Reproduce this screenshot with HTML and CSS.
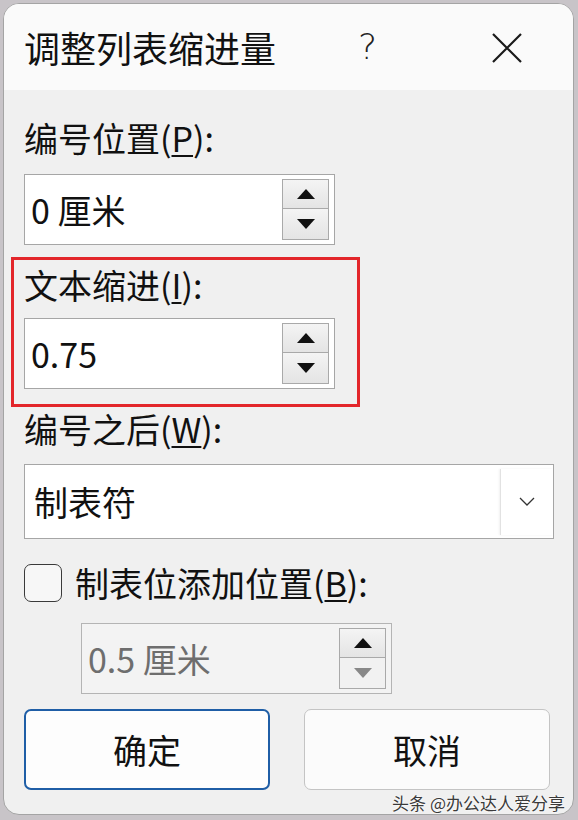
FILE: index.html
```html
<!DOCTYPE html>
<html lang="zh-CN">
<head>
  <meta charset="UTF-8" />
  <meta name="viewport" content="width=device-width, initial-scale=1.0"/>
  <title>调整列表缩进量</title>
  <link rel="stylesheet" href="styles.css">
</head>
<body>

  <div class="dialog">
    <div class="titlebar">
      <span class="title">调整列表缩进量</span>
      <span class="help">?</span>
      <svg class="close" width="32" height="32" viewBox="0 0 32 32">
        <path d="M2 2 L30 30 M30 2 L2 30" stroke="#1a1a1a" stroke-width="2.2" fill="none"/>
      </svg>
    </div>

    <div class="content">
      <div class="label label-first">编号位置(<u>P</u>):</div>
      <div class="spin">
        <span class="spin-value">0 厘米</span>
        <div class="spin-btns">
          <div class="spin-btn"><svg width="18" height="10" viewBox="0 0 18 10"><polygon points="9,0 18,10 0,10" fill="#111"/></svg></div>
          <div class="spin-btn"><svg width="18" height="10" viewBox="0 0 18 10"><polygon points="0,0 18,0 9,10" fill="#111"/></svg></div>
        </div>
      </div>

      <div class="highlight">
        <div class="label">文本缩进(<u>I</u>):</div>
        <div class="spin spin-second">
          <span class="spin-value">0.75</span>
          <div class="spin-btns">
            <div class="spin-btn"><svg width="18" height="10" viewBox="0 0 18 10"><polygon points="9,0 18,10 0,10" fill="#111"/></svg></div>
            <div class="spin-btn"><svg width="18" height="10" viewBox="0 0 18 10"><polygon points="0,0 18,0 9,10" fill="#111"/></svg></div>
          </div>
        </div>
      </div>

      <div class="label label-after">编号之后(<u>W</u>):</div>
      <div class="select">
        <span class="select-value">制表符</span>
        <div class="select-btn">
          <svg width="16" height="9" viewBox="0 0 16 9"><polyline points="1,1 8,8 15,1" stroke="#333" stroke-width="1.3" fill="none"/></svg>
        </div>
      </div>

      <div class="check-row">
        <span class="checkbox"></span>
        <span class="check-label">制表位添加位置(<u>B</u>):</span>
      </div>

      <div class="spin spin-disabled">
        <span class="spin-value">0.5 厘米</span>
        <div class="spin-btns">
          <div class="spin-btn"><svg width="18" height="10" viewBox="0 0 18 10"><polygon points="9,0 18,10 0,10" fill="#111"/></svg></div>
          <div class="spin-btn"><svg width="18" height="10" viewBox="0 0 18 10"><polygon points="0,0 18,0 9,10" fill="#888"/></svg></div>
        </div>
      </div>

      <div class="buttons">
        <button class="btn btn-ok">确定</button>
        <button class="btn">取消</button>
      </div>
    </div>

    <div class="watermark">头条 @办公达人爱分享</div>
  </div>

</body>
</html>
```

FILE: styles.css
```css
body {
  margin: 0;
  padding: 3px 4px 5px 3px;
  background: #c8c4c8;
  font-family: "Noto Sans CJK SC", "Noto Sans", sans-serif;
  color: #111;
}
.dialog {
  position: relative;
  width: 569px;
  height: 810px;
  background: #f0f0f0;
  border: 1px solid #a4a4a4;
  border-radius: 16px;
  overflow: hidden;
}
.titlebar {
  height: 86px;
  background: #fafafa;
  display: flex;
  align-items: center;
  padding-left: 20px;
}
.title {
  font-size: 36px;
  line-height: 42px;
  width: 334px;
}
.help {
  font-size: 36px;
  line-height: 42px;
  font-family: "DejaVu Sans", sans-serif;
  font-weight: 300;
  color: #222;
  width: 133px;
}
.close {
  margin-top: 2px;
}
.content {
  padding-left: 20px;
}
.label {
  font-size: 34px;
  line-height: 40px;
  height: 40px;
}
.label u {
  text-decoration-thickness: 2px;
  text-underline-offset: 3px;
}
.label-first {
  margin-top: 28px;
}
.spin {
  width: 309px;
  height: 69px;
  margin-top: 16px;
  background: #fff;
  border: 1px solid #a6a6a6;
  display: flex;
  align-items: center;
  justify-content: space-between;
}
.spin-value {
  font-size: 34px;
  line-height: 40px;
  padding-left: 6px;
}
.spin-btns {
  display: flex;
  flex-direction: column;
  margin-right: 5px;
}
.spin-btn {
  width: 45px;
  height: 28px;
  border: 1px solid #a9a9a9;
  background: linear-gradient(#f4f4f4, #e4e4e4);
  display: flex;
  align-items: center;
  justify-content: center;
}
.spin-btn + .spin-btn {
  border-top: none;
  height: 30px;
}
.highlight {
  width: 317px;
  margin: 12px 0 0 -13px;
  padding: 5px 16px 15px 10px;
  border: 3px solid #e3262b;
}
.spin-second {
  margin-top: 13px;
}
.label-after {
  margin-top: 2px;
}
.select {
  width: 528px;
  height: 73px;
  margin-top: 15px;
  background: #fff;
  border: 1px solid #a6a6a6;
  display: flex;
  align-items: center;
  justify-content: space-between;
}
.select-value {
  font-size: 34px;
  line-height: 40px;
  padding-left: 9px;
}
.select-btn {
  width: 52px;
  height: 66px;
  border-left: 1px solid #e2e2e2;
  box-shadow: -1px 0 2px rgba(0,0,0,0.06);
  display: flex;
  align-items: center;
  justify-content: center;
}
.check-row {
  display: flex;
  align-items: center;
  margin-top: 24px;
  height: 40px;
}
.checkbox {
  width: 36px;
  height: 36px;
  border: 1.5px solid #3a3a3a;
  border-radius: 7px;
  background: #f7f7f7;
}
.check-label {
  font-size: 34px;
  line-height: 40px;
  margin-left: 13px;
}
.check-label u {
  text-decoration-thickness: 2px;
  text-underline-offset: 3px;
}
.spin-disabled {
  margin: 20px 0 0 57px;
  background: #f3f3f3;
  border-color: #b4b4b4;
}
.spin-disabled .spin-value {
  color: #6e6e6e;
}
.spin-disabled .spin-btn + .spin-btn {
  background: #f1f1f1;
}
.buttons {
  display: flex;
  gap: 34px;
  margin-top: 15px;
}
.btn {
  width: 246px;
  height: 81px;
  border: 1px solid #c4c4c4;
  border-radius: 7px;
  background: #fbfbfb;
  font-family: "Noto Sans CJK SC", sans-serif;
  font-size: 34px;
  color: #111;
}
.btn-ok {
  border: 2px solid #1f5ea6;
  background: #fdfdfd;
}
.watermark {
  position: absolute;
  right: 8px;
  bottom: 0;
  font-size: 17px;
  line-height: 22px;
  color: #3a3a3a;
  text-shadow: 0 0 2px #fff, 0 0 2px #fff;
}
```
